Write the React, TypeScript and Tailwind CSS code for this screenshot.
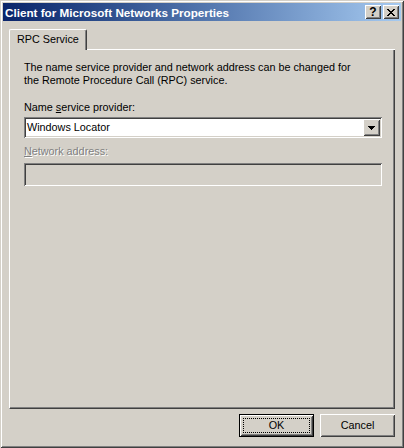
import React from "react";

const raised =
  "shadow-[inset_1px_1px_0_#ffffff,inset_-1px_-1px_0_#404040,inset_2px_2px_0_#d4d0c8,inset_-2px_-2px_0_#808080]";
const sunken =
  "shadow-[inset_1px_1px_0_#808080,inset_-1px_-1px_0_#ffffff,inset_2px_2px_0_#404040,inset_-2px_-2px_0_#d4d0c8]";

// close glyph of the caption bar, pixel for pixel
const CloseGlyph = () => (
  <svg width="8" height="7" viewBox="0 0 8 7" shapeRendering="crispEdges">
    <path
      d="M0 0h2v1H0zM6 0h2v1H6zM1 1h2v1H1zM5 1h2v1H5zM2 2h4v1H2zM3 3h2v1H3zM2 4h4v1H2zM1 5h2v1H1zM5 5h2v1H5zM0 6h2v1H0zM6 6h2v1H6z"
      fill="#000"
    />
  </svg>
);

const CaptionButton: React.FC<{ children: React.ReactNode }> = ({ children }) => (
  <div className={`flex h-[14px] w-[16px] items-center justify-center bg-[#d4d0c8] ${raised}`}>
    {children}
  </div>
);

const PushButton: React.FC<{ label: string; isDefault?: boolean }> = ({ label, isDefault }) => {
  if (isDefault) {
    return (
      <div className="h-[23px] w-[75px] border border-black">
        <div className={`flex h-full w-full items-center justify-center p-[3px] ${raised}`}>
          <div className="flex h-full w-full items-center justify-center border border-dotted border-black">
            {label}
          </div>
        </div>
      </div>
    );
  }
  return (
    <div className={`flex h-[23px] w-[75px] items-center justify-center ${raised}`}>{label}</div>
  );
};

export default function App() {
  return (
    <div
      className="flex h-[448px] w-[404px] flex-col bg-[#d4d0c8] p-[3px] text-[10.8px] leading-[13px] text-black shadow-[inset_1px_1px_0_#d4d0c8,inset_-1px_-1px_0_#404040,inset_2px_2px_0_#ffffff,inset_-2px_-2px_0_#808080]"
      style={{ fontFamily: 'Tahoma, "Liberation Sans", Arial, sans-serif' }}
    >
      {/* title bar */}
      <div className="flex h-[18px] items-center justify-between bg-linear-to-r from-[#0a246a] to-[#a6caf0] pl-[2px] pr-[2px]">
        <span className="text-[11.7px] font-bold text-white">Client for Microsoft Networks Properties</span>
        <div className="flex items-center gap-[2px]">
          <CaptionButton>
            <span className="text-[12px] leading-[12px] font-bold">?</span>
          </CaptionButton>
          <CaptionButton>
            <CloseGlyph />
          </CaptionButton>
        </div>
      </div>

      {/* client area */}
      <div className="mt-px flex flex-1 flex-col px-[6px] pt-[7px] pb-[8px]">
        {/* tab strip */}
        <div className="flex h-[21px] items-end">
          <div className="h-[21px] w-[78px] rounded-tl-[2px] rounded-tr-[2px] border-t border-l border-r border-t-white border-l-white border-r-[#404040] pl-[7px] pt-[3px] shadow-[inset_-1px_0_0_#808080]">
            RPC Service
          </div>
          <div className="h-px flex-1 bg-white" />
        </div>

        {/* tab page */}
        <div className="flex flex-1 flex-col border-l border-b border-r border-l-white border-b-[#404040] border-r-[#404040] pl-[14px] pt-[11px] shadow-[inset_-1px_-1px_0_#808080]">
          <p>
            The name service provider and network address can be changed for
            <br />
            the Remote Procedure Call (RPC) service.
          </p>

          <div className="mt-[14px]">
            Name <u>s</u>ervice provider:
          </div>
          <div className={`mt-[3px] flex h-[21px] w-[358px] items-center bg-white p-[2px] ${sunken}`}>
            <span className="flex-1 pl-[1px]">Windows Locator</span>
            <div className={`flex h-[17px] w-[17px] items-center justify-center bg-[#d4d0c8] ${raised}`}>
              <svg width="7" height="4" viewBox="0 0 7 4" shapeRendering="crispEdges">
                <path d="M0 0h7v1H0zM1 1h5v1H1zM2 2h3v1H2zM3 3h1v1H3z" fill="#000" />
              </svg>
            </div>
          </div>

          <div className="mt-[7px] text-[#808080] [text-shadow:1px_1px_0_#ffffff]">
            <u>N</u>etwork address:
          </div>
          <div className={`mt-[5px] h-[23px] w-[358px] bg-[#d4d0c8] ${sunken}`} />
        </div>

        {/* buttons */}
        <div className="mt-[5px] flex justify-end gap-[6px]">
          <PushButton label="OK" isDefault />
          <PushButton label="Cancel" />
        </div>
      </div>
    </div>
  );
}
